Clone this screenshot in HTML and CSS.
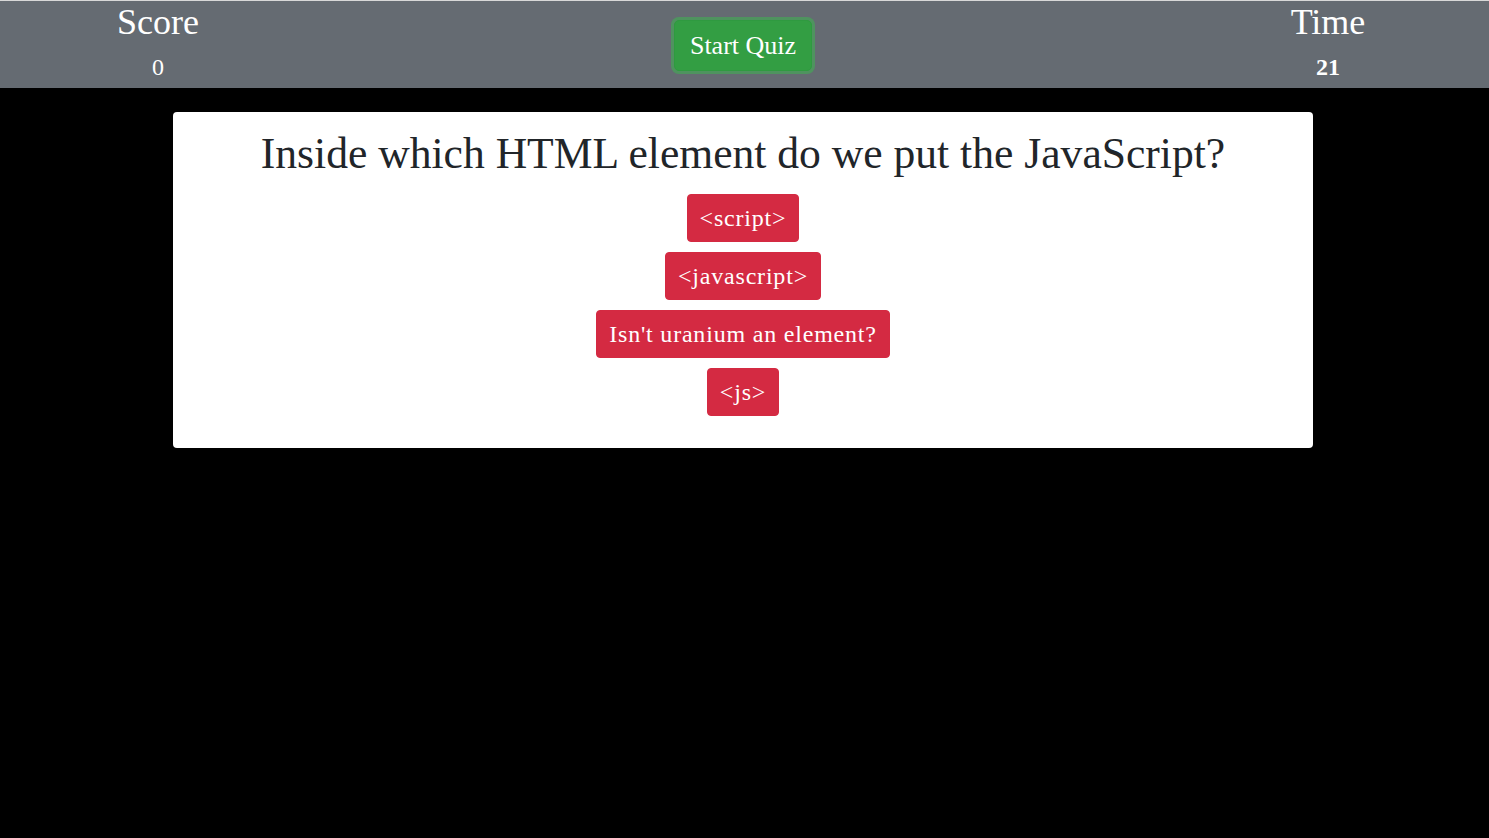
FILE: index.html
```html
<!DOCTYPE html>
<html lang="en">
<head>
<meta charset="utf-8">
<title>Quiz</title>
<link rel="stylesheet" href="styles.css">
</head>
<body>
<header class="topbar">
  <div class="stat stat-left">
    <div class="stat-label">Score</div>
    <div class="stat-value score-value">0</div>
  </div>
  <div class="center">
    <button class="btn-start">Start Quiz</button>
  </div>
  <div class="stat stat-right">
    <div class="stat-label">Time</div>
    <div class="stat-value time-value">21</div>
  </div>
</header>
<div class="content">
  <main class="card">
    <h1 class="question">Inside which HTML element do we put the JavaScript?</h1>
    <div class="answers">
      <button class="btn-answer">&lt;script&gt;</button>
      <button class="btn-answer">&lt;javascript&gt;</button>
      <button class="btn-answer">Isn't uranium an element?</button>
      <button class="btn-answer">&lt;js&gt;</button>
    </div>
  </main>
</div>
</body>
</html>
```
FILE: styles.css
```css
html, body {
  margin: 0;
  padding: 0;
  background: #000;
  font-family: "Liberation Serif", "DejaVu Serif", serif;
}
body {
  min-height: 838px;
}
.topbar {
  display: grid;
  grid-template-columns: 316px 1fr 322px;
  height: 87px;
  background: #656b72;
  border-top: 1px solid #d8d8d8;
  color: #fff;
}
.stat {
  display: flex;
  flex-direction: column;
  align-items: center;
}
.stat-label {
  font-size: 36px;
  line-height: 40px;
  margin-top: 1px;
}
.stat-value {
  font-size: 24px;
  line-height: 30px;
  margin-top: 10px;
}
.time-value {
  font-weight: bold;
}
.center {
  display: flex;
  justify-content: center;
  align-items: center;
  padding-left: 3px;
}
.btn-start {
  font-family: inherit;
  font-size: 26px;
  color: #fff;
  background: #339e43;
  border: 1px solid #2f9a40;
  border-radius: 5px;
  padding: 8px 15px;
  line-height: 33px;
  box-shadow: 0 0 0 3px rgba(72, 160, 90, 0.75);
  margin-top: 2px;
}
.content {
  display: flex;
  justify-content: center;
  padding-right: 3px;
}
.card {
  width: 1140px;
  margin-top: 24px;
  background: #fff;
  border-radius: 4px;
  padding: 16px 0 32px;
  display: flex;
  flex-direction: column;
  align-items: center;
}
.question {
  margin: 0 0 16px;
  font-weight: normal;
  font-size: 43.6px;
  line-height: 50px;
  color: #212529;
}
.answers {
  display: flex;
  flex-direction: column;
  align-items: center;
  gap: 10px;
}
.btn-answer {
  font-family: inherit;
  font-size: 24px;
  letter-spacing: 0.8px;
  line-height: 30px;
  color: #fff;
  background: #d42a42;
  border: 1px solid #d42a42;
  border-radius: 4px;
  padding: 8px 12px;
}
```
